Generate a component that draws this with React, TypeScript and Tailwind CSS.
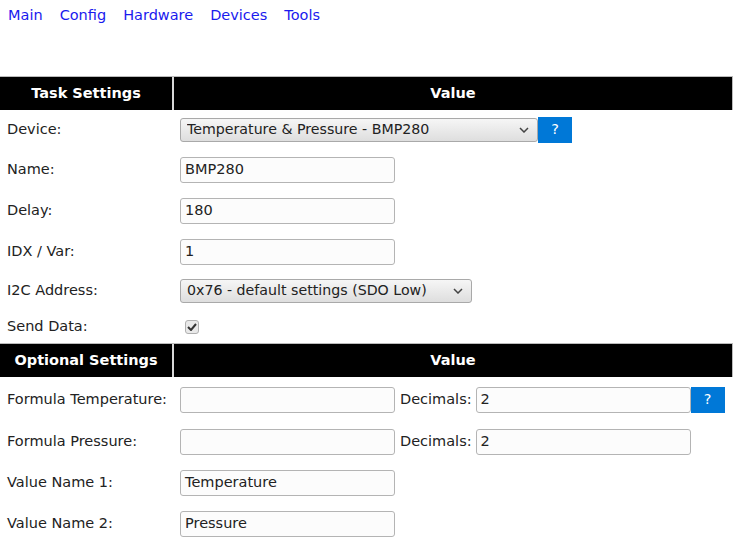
import React from "react";

const font = { fontFamily: '"DejaVu Sans", sans-serif' };

function Chevron() {
  return (
    <svg width="10" height="6" viewBox="0 0 10 6" className="shrink-0">
      <path d="M1 1 L5 5 L9 1" fill="none" stroke="#444" strokeWidth="1.5" />
    </svg>
  );
}

function Select({ value, width }: { value: string; width: string }) {
  return (
    <div
      className={`${width} h-[24px] flex items-center justify-between pl-[6px] pr-[8px] rounded-[3px] border border-[#a9a9a9] bg-gradient-to-b from-[#f6f6f6] to-[#dedede] text-[14.2px] text-[#222]`}
    >
      <span className="truncate">{value}</span>
      <Chevron />
    </div>
  );
}

function Input({ value = "", width = "w-[215px]" }: { value?: string; width?: string }) {
  return (
    <div
      className={`${width} h-[26px] flex items-center px-[4px] rounded-[3px] border border-[#b4b4b4] bg-[#fcfcfc] text-[#222]`}
    >
      {value}
    </div>
  );
}

function Help() {
  return (
    <div className="w-[34px] h-[26px] flex items-center justify-center bg-[#0078d7] text-white">?</div>
  );
}

function Row({ label, h, children }: { label: string; h: string; children?: React.ReactNode }) {
  return (
    <div className={`flex ${h}`}>
      <div className="w-[174px] shrink-0 flex items-center pl-[7px]">{label}</div>
      <div className="flex-1 flex items-center pl-[6px]">{children}</div>
    </div>
  );
}

function Header({ title }: { title: string }) {
  return (
    <div className="flex h-[34px] border-t border-r border-[#bbb] font-bold text-white">
      <div className="w-[172px] shrink-0 bg-black flex items-center justify-center">{title}</div>
      <div className="w-[2px] bg-[#d8d8d8]" />
      <div className="flex-1 bg-black flex items-center justify-center">Value</div>
    </div>
  );
}

export default function App() {
  const links = ["Main", "Config", "Hardware", "Devices", "Tools"];
  return (
    <div className="w-[737px] h-[545px] overflow-hidden bg-white text-[14.5px] text-[#222]" style={font}>
      <nav className="flex gap-[17px] pl-[8px] pt-[5px] h-[76px]">
        {links.map((l) => (
          <a key={l} className="text-[#1a1aee] leading-[20px]">
            {l}
          </a>
        ))}
      </nav>
      <div className="w-[733px]">
        <Header title="Task Settings" />
        <Row label="Device:" h="h-[39px]">
          <Select value="Temperature & Pressure - BMP280" width="w-[358px]" />
          <Help />
        </Row>
        <Row label="Name:" h="h-[41px]">
          <Input value="BMP280" />
        </Row>
        <Row label="Delay:" h="h-[41px]">
          <Input value="180" />
        </Row>
        <Row label="IDX / Var:" h="h-[41px]">
          <Input value="1" />
        </Row>
        <Row label="I2C Address:" h="h-[38px]">
          <Select value="0x76 - default settings (SDO Low)" width="w-[292px]" />
        </Row>
        <Row label="Send Data:" h="h-[33px]">
          <div className="ml-[5px] w-[14px] h-[14px] rounded-[3px] border border-[#b0b0b0] bg-[#e9e9e9] flex items-center justify-center">
            <svg width="10" height="8" viewBox="0 0 10 8">
              <path d="M1 4 L4 7 L9 1" fill="none" stroke="#333" strokeWidth="2" />
            </svg>
          </div>
        </Row>
        <Header title="Optional Settings" />
        <Row label="Formula Temperature:" h="h-[45px]">
          <Input />
          <span className="ml-[5px] mr-[4px]">Decimals:</span>
          <Input value="2" />
          <Help />
        </Row>
        <Row label="Formula Pressure:" h="h-[40px]">
          <Input />
          <span className="ml-[5px] mr-[4px]">Decimals:</span>
          <Input value="2" />
        </Row>
        <Row label="Value Name 1:" h="h-[41px]">
          <Input value="Temperature" />
        </Row>
        <Row label="Value Name 2:" h="h-[41px]">
          <Input value="Pressure" />
        </Row>
      </div>
    </div>
  );
}
